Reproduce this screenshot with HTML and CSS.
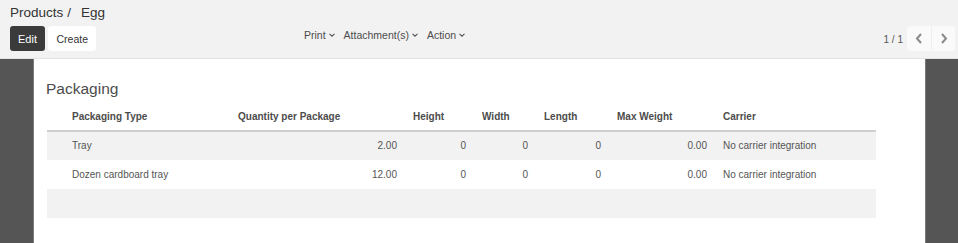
FILE: index.html
```html
<!DOCTYPE html>
<html lang="en">
<head>
  <meta charset="UTF-8" />
  <title>Products / Egg</title>
  <link rel="stylesheet" href="styles.css">
</head>
<body>
  <div class="control-panel">
    <div class="breadcrumb">
      <span class="crumb">Products</span><span class="crumb-sep">/</span><span class="crumb active">Egg</span>
    </div>
    <div class="cp-row">
      <div class="cp-buttons">
        <button class="btn btn-primary">Edit</button>
        <button class="btn btn-default">Create</button>
      </div>
      <div class="cp-menus">
        <span class="menu-item">Print <svg class="caret" width="6" height="4" viewBox="0 0 6 4"><path d="M0.5 0.8 L3 3.2 L5.5 0.8" /></svg></span>
        <span class="menu-item">Attachment(s) <svg class="caret" width="6" height="4" viewBox="0 0 6 4"><path d="M0.5 0.8 L3 3.2 L5.5 0.8" /></svg></span>
        <span class="menu-item">Action <svg class="caret" width="6" height="4" viewBox="0 0 6 4"><path d="M0.5 0.8 L3 3.2 L5.5 0.8" /></svg></span>
      </div>
      <div class="cp-pager">
        <span class="pager-value">1 / 1</span>
        <div class="pager-btns">
          <button class="pager-btn"><svg width="8" height="11" viewBox="0 0 8 11"><path d="M6 1 L2 5.5 L6 10" /></svg></button>
          <button class="pager-btn"><svg width="8" height="11" viewBox="0 0 8 11"><path d="M2 1 L6 5.5 L2 10" /></svg></button>
        </div>
      </div>
    </div>
  </div>

  <div class="form-bg">
    <div class="sheet">
      <h2 class="section-title">Packaging</h2>
      <table class="list-table">
        <thead>
          <tr>
            <th class="col-type">Packaging Type</th>
            <th class="col-qty">Quantity per Package</th>
            <th class="col-height">Height</th>
            <th class="col-width">Width</th>
            <th class="col-length">Length</th>
            <th class="col-weight">Max Weight</th>
            <th class="col-carrier">Carrier</th>
          </tr>
        </thead>
        <tbody>
          <tr>
            <td>Tray</td>
            <td class="num">2.00</td>
            <td class="num">0</td>
            <td class="num">0</td>
            <td class="num">0</td>
            <td class="num">0.00</td>
            <td>No carrier integration</td>
          </tr>
          <tr>
            <td>Dozen cardboard tray</td>
            <td class="num">12.00</td>
            <td class="num">0</td>
            <td class="num">0</td>
            <td class="num">0</td>
            <td class="num">0.00</td>
            <td>No carrier integration</td>
          </tr>
          <tr class="empty-row">
            <td colspan="7"></td>
          </tr>
        </tbody>
      </table>
    </div>
  </div>
</body>
</html>
```

FILE: styles.css
```css
html, body {
  margin: 0;
  padding: 0;
}

body {
  width: 958px;
  height: 243px;
  overflow: hidden;
  font-family: "Liberation Sans", Arial, sans-serif;
  color: #4c4c4c;
  background-color: #555555;
}

/* Control panel */
.control-panel {
  background-color: #f2f2f2;
  border-bottom: 1px solid #e3e3e3;
  padding: 4px 3px 7px 10px;
  height: 47px;
}

.breadcrumb {
  font-size: 13.5px;
  line-height: 18px;
  color: #333333;
}

.crumb-sep {
  margin: 0 10px 0 4px;
}

.cp-row {
  display: flex;
  align-items: center;
  margin-top: 4px;
}

.cp-buttons {
  flex: 0 0 294px;
  display: flex;
  gap: 3px;
}

.btn {
  font-family: inherit;
  font-size: 10.5px;
  height: 25px;
  padding: 0 8px;
  border: none;
  border-radius: 3px;
  cursor: pointer;
}

.btn-primary {
  background-color: #3b3b3b;
  color: #ffffff;
  font-size: 11px;
}

.btn-default {
  background-color: #ffffff;
  color: #333333;
  padding: 0 8.5px;
}

.cp-menus {
  flex: 1;
  display: flex;
  gap: 9px;
  font-size: 10.5px;
  color: #4c4c4c;
  margin-top: -8px;
}

.menu-item {
  display: inline-flex;
  align-items: center;
  gap: 3px;
}

.caret path {
  fill: none;
  stroke: #555555;
  stroke-width: 1.1;
}

.cp-pager {
  display: flex;
  align-items: center;
  gap: 4px;
}

.pager-value {
  font-size: 10px;
  color: #555555;
  margin-top: 1px;
}

.pager-btns {
  display: flex;
  background-color: #fafafa;
  border-radius: 3px;
}

.pager-btn {
  width: 24px;
  height: 25px;
  padding: 0;
  border: none;
  background: none;
  display: flex;
  align-items: center;
  justify-content: center;
}

.pager-btn + .pager-btn {
  border-left: 1px solid #efefef;
}

.pager-btn path {
  fill: none;
  stroke: #8a8a8a;
  stroke-width: 2;
}

/* Form sheet */
.form-bg {
  padding: 0 33px 0 34px;
  background-color: #555555;
}

.sheet {
  background-color: #ffffff;
  height: 184px;
  padding: 20px 0 0 12px;
  box-sizing: border-box;
  box-shadow: -1px 0 0 #7a7a7a, 1px 0 0 #7a7a7a;
}

.section-title {
  font-size: 15.5px;
  font-weight: normal;
  line-height: 20px;
  margin: 0 0 5px 0;
  color: #4c4c4c;
}

.list-table {
  border-collapse: collapse;
  table-layout: fixed;
  width: 829px;
  margin-left: 1px;
  font-size: 10px;
  line-height: 12px;
}

.list-table th {
  height: 27px;
  padding: 0 8px;
  text-align: left;
  font-weight: bold;
  color: #4c4c4c;
  border-bottom: 2px solid #cfcfcf;
  box-sizing: border-box;
  white-space: nowrap;
}

.list-table td {
  height: 29px;
  padding: 0 8px;
  color: #555555;
  white-space: nowrap;
  box-sizing: border-box;
}

.list-table th:first-child,
.list-table td:first-child {
  padding-left: 25px;
}

.list-table tbody tr:nth-child(odd) td {
  background-color: #f2f2f2;
}

.list-table td.num {
  text-align: right;
}

.col-type { width: 183px; }
.col-qty { width: 175px; }
.col-height { width: 69px; }
.col-width { width: 62px; }
.col-length { width: 73px; }
.col-weight { width: 106px; }
.col-carrier { width: 161px; }
```
